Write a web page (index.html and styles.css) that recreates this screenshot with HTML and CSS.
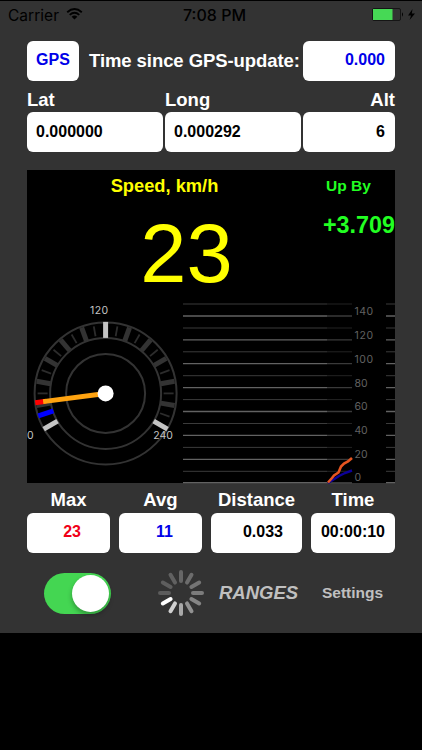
FILE: index.html
```html
<!DOCTYPE html>
<html lang="en">
<head>
	<meta charset="UTF-8">
	<title>GPS Speed</title>
	<link rel="stylesheet" href="styles.css">
</head>
<body>
	<div class="app">
		<div class="status">
			<div class="carrier">
				<svg class="carrier-name" width="54" height="22"><text x="0" y="14.5" textLength="51">Carrier</text></svg>
				<svg class="wifi" width="17" height="12" viewBox="0 0 17 12">
					<path d="M1.2 4.2Q8.5 -2 15.8 4.2M3.7 6.9Q8.5 2.8 13.3 6.9" fill="none" stroke="#000" stroke-width="1.9"/>
					<path d="M5.6 8.8Q8.5 6.4 11.4 8.8L8.5 11.6Z"/>
				</svg>
			</div>
			<svg class="clock" width="72" height="22"><text x="1" y="14.5" textLength="63">7:08 PM</text></svg>
			<svg class="battery" width="44" height="14" viewBox="0 0 44 14">
				<rect x=".5" y=".5" width="28" height="12" rx="1.5" fill="#333" stroke="#151515"/>
				<rect x="1" y="1" width="19.5" height="11" fill="#46d955"/>
				<path d="M30 4.3Q32 6.5 30 8.8Z"/>
				<path d="M40.5 1L36 7.6H39L37.6 12L43 5.6H39.8Z"/>
			</svg>
		</div>

		<div class="gps-row">
			<button class="box gps">GPS</button>
			<svg class="label since" width="214" height="24"><text x="1" y="18" textLength="211">Time since GPS-update:</text></svg>
			<div class="box update blue">0.000</div>
		</div>

		<div class="position">
			<div class="field">
				<div class="label">Lat</div>
				<div class="box left">0.000000</div>
			</div>
			<div class="field">
				<div class="label">Long</div>
				<div class="box left">0.000292</div>
			</div>
			<div class="field alt">
				<div class="label">Alt</div>
				<div class="box">6</div>
			</div>
		</div>

		<div class="display">
			<div class="readout">
				<div class="speed">
					<div class="speed-title">Speed, km/h</div>
					<div class="speed-value">23</div>
				</div>
				<div class="up">
					<div class="up-title">Up By</div>
					<div class="up-value">+3.709</div>
				</div>
			</div>
			<div class="graphs">
				<svg class="gauge" width="156" height="183" viewBox="27 300 156 183">
					<g fill="none" stroke="#333" stroke-width="2">
						<circle cx="105.6" cy="393.4" r="71"/>
						<circle cx="105.6" cy="393.4" r="55.5"/>
						<circle cx="105.6" cy="393.4" r="39.5"/>
					</g>
					<!-- ticks are drawn upwards from the centre, then turned -->
					<g transform="translate(105.6 393.4)">
						<g stroke="#333" stroke-width="5">
							<path d="M0-56V-70" transform="rotate(-100)"/>
							<path d="M0-56V-70" transform="rotate(-80)"/>
							<path d="M0-56V-70" transform="rotate(-60)"/>
							<path d="M0-56V-70" transform="rotate(-40)"/>
							<path d="M0-56V-70" transform="rotate(-20)"/>
							<path d="M0-56V-70" transform="rotate(20)"/>
							<path d="M0-56V-70" transform="rotate(40)"/>
							<path d="M0-56V-70" transform="rotate(60)"/>
							<path d="M0-56V-70" transform="rotate(80)"/>
							<path d="M0-56V-70" transform="rotate(100)"/>
						</g>
						<g stroke="#2c2c2c" stroke-width="1.8">
							<path d="M0-58V-68" transform="rotate(-90)"/>
							<path d="M0-58V-68" transform="rotate(-70)"/>
							<path d="M0-58V-68" transform="rotate(-50)"/>
							<path d="M0-58V-68" transform="rotate(-30)"/>
							<path d="M0-58V-68" transform="rotate(-10)"/>
							<path d="M0-58V-68" transform="rotate(10)"/>
							<path d="M0-58V-68" transform="rotate(30)"/>
							<path d="M0-58V-68" transform="rotate(50)"/>
							<path d="M0-58V-68" transform="rotate(70)"/>
							<path d="M0-58V-68" transform="rotate(90)"/>
							<path d="M0-58V-68" transform="rotate(110)"/>
						</g>
						<g stroke="#c4c4c4" stroke-width="5">
							<path d="M0-55.5V-71.5" transform="rotate(-120)"/>
							<path d="M0-55.5V-71.5"/>
							<path d="M0-55.5V-71.5" transform="rotate(120)"/>
						</g>
						<path d="M0-55V-71" stroke="#00f" stroke-width="5" transform="rotate(-108.5)"/>
						<path d="M0-60V-71" stroke="#f00" stroke-width="5" transform="rotate(-97.5)"/>
						<path d="M0 0V-63" stroke="#ffa310" stroke-width="5" transform="rotate(-97.5)"/>
						<circle r="8" fill="#fff"/>
					</g>
					<g class="gauge-text">
						<text x="90" y="314" textLength="18">120</text>
						<text x="27" y="439.3">0</text>
						<text x="153.3" y="439.3" textLength="19.5">240</text>
					</g>
				</svg>
				<svg class="chart" width="212" height="183" viewBox="183 300 212 183">
					<path d="M183 304H352M183 328H352M183 351.8H352M183 375.7H352M183 399.6H352M183 423.5H352M183 447.4H352M183 471.3H352M386 304H395M386 328H395M386 351.8H395M386 375.7H395M386 399.6H395M386 423.5H395M386 447.4H395M386 471.3H395" stroke="#3b3b3b"/>
					<path d="M183 316H352M183 339.8H352M183 363.7H352M183 387.6H352M183 411.5H352M183 435.4H352M183 459.3H352M183 482.6H352M386 316H395M386 339.8H395M386 363.7H395M386 387.6H395M386 411.5H395M386 435.4H395M386 459.3H395M386 482.6H395" stroke="#626262" stroke-width="1.3"/>
					<rect x="327" y="300" width="25" height="183" opacity=".4"/>
					<path d="M328 483L339 476L345 473L352 470.5" fill="none" stroke="#0c0098" stroke-width="2.4"/>
					<path d="M328 482.5L332 478L334 475.5L338.5 472.5L341 466.5L344 463.5L348 461.5L352 458" fill="none" stroke="#e65520" stroke-width="2.6"/>
					<g class="chart-text">
						<text x="354.5" y="314.8" textLength="18.5">140</text>
						<text x="354.5" y="338.7" textLength="18.5">120</text>
						<text x="354.5" y="362.5" textLength="18.5">100</text>
						<text x="354.5" y="386.5" textLength="13">80</text>
						<text x="354.5" y="410.3" textLength="13">60</text>
						<text x="354.5" y="434.3" textLength="13">40</text>
						<text x="354.5" y="458.2" textLength="13">20</text>
						<text x="354.5" y="481.4">0</text>
					</g>
				</svg>
			</div>
		</div>

		<div class="totals">
			<div class="field">
				<div class="label">Max</div>
				<div class="box red mid">23</div>
			</div>
			<div class="field">
				<div class="label">Avg</div>
				<div class="box blue mid">11</div>
			</div>
			<div class="field">
				<div class="label">Distance</div>
				<div class="box dist">0.033</div>
			</div>
			<div class="field">
				<div class="label">Time</div>
				<div class="box time">00:00:10</div>
			</div>
		</div>

		<div class="controls">
			<div class="switch"><div class="knob"></div></div>
			<svg class="spinner" width="48" height="48" viewBox="-24 -24 48 48" stroke-width="4" stroke-linecap="round">
				<path d="M0-12V-21" stroke="#666"/>
				<path d="M0-12V-21" stroke="#6c6c6c" transform="rotate(30)"/>
				<path d="M0-12V-21" stroke="#747474" transform="rotate(60)"/>
				<path d="M0-12V-21" stroke="#7c7c7c" transform="rotate(90)"/>
				<path d="M0-12V-21" stroke="#858585" transform="rotate(120)"/>
				<path d="M0-12V-21" stroke="#929292" transform="rotate(150)"/>
				<path d="M0-12V-21" stroke="#a9a9a9" transform="rotate(180)"/>
				<path d="M0-12V-21" stroke="#d0d0d0" transform="rotate(210)"/>
				<path d="M0-12V-21" stroke="#fff" transform="rotate(240)"/>
				<path d="M0-12V-21" stroke="#5c5c5c" transform="rotate(270)"/>
				<path d="M0-12V-21" stroke="#5e5e5e" transform="rotate(300)"/>
				<path d="M0-12V-21" stroke="#616161" transform="rotate(330)"/>
			</svg>
			<div class="ranges">RANGES</div>
			<div class="settings">Settings</div>
		</div>
	</div>
</body>
</html>
```

FILE: styles.css
```css
*{
	box-sizing: border-box;
}
body{
	margin: 0;
	height: 750px;
	padding-top: 1px;
	background-color: #000;
	font-family: "Liberation Sans", Arial, sans-serif;
	font-weight: bold;
	overflow: hidden;
}
svg{
	display: block;
	flex: none;
	overflow: visible;
}
.app{
	width: 422px;
	height: 632px;
	padding: 0 27px;
	background-color: #333;
}
.status{
	height: 39.5px;
	margin: 0 -27px;
	padding: 5px 6px 0 8px;
	display: flex;
	align-items: flex-start;
	font-family: Inter, sans-serif;
	font-size: 15.5px;
	font-weight: 400;
}
.carrier{
	display: flex;
	width: 174px;
}
.wifi{
	margin: 2px 0 0 4px;
}
.clock{
	font-weight: 500;
	font-size: 16px;
}
.battery{
	margin: 2px 0 0 auto;
}
.box{
	display: flex;
	align-items: center;
	justify-content: flex-end;
	height: 40px;
	padding: 0 10px 1px 9px;
	border: 0;
	border-radius: 6px;
	background-color: #fff;
	color: #000;
	font-size: 16px;
	white-space: nowrap;
}
.label{
	color: #fff;
	font-size: 18.5px;
	line-height: 24px;
	white-space: nowrap;
}
.since{
	margin-left: 7px;
	fill: #fff;
}
.blue{
	color: #0000e8;
}
.red{
	color: #f00018;
}
.gps-row{
	display: flex;
	justify-content: space-between;
	align-items: center;
}
.gps{
	width: 52px;
	padding: 0 0 1px;
	justify-content: center;
	color: #0000e8;
	font-family: inherit;
	font-weight: bold;
}
.update{
	width: 92px;
}
.position{
	display: grid;
	grid-template-columns: 136px 136px 92px;
	column-gap: 2px;
	margin-top: 6.5px;
}
.position .label{
	height: 25px;
	line-height: 26px;
}
.left{
	justify-content: flex-start;
}
.alt{
	text-align: right;
}
.display{
	width: 368px;
	height: 313px;
	margin-top: 18px;
	background-color: #000;
}
.readout{
	display: flex;
	justify-content: flex-end;
	height: 130px;
}
.speed{
	width: 170px;
	margin-right: 53px;
	text-align: center;
	color: #ff0;
}
.speed-title{
	margin-left: -39px;
	padding-top: 5px;
	font-size: 18.3px;
	line-height: 22px;
}
.speed-value{
	margin: 9px 0 0 5px;
	font-size: 83px;
	line-height: 96px;
	font-weight: 400;
}
.up{
	width: 73px;
	color: #2f2;
}
.up-title{
	padding: 5px 0 0 4px;
	font-size: 15.5px;
	line-height: 22px;
}
.up-value{
	margin: 14px 0 0 1px;
	font-size: 23.3px;
	line-height: 28px;
	white-space: nowrap;
}
.graphs{
	display: flex;
}
.gauge-text{
	fill: #c4c4c4;
	font: 400 10.5px Inter, sans-serif;
}
.chart-text{
	fill: #626262;
	font: 400 10.5px Inter, sans-serif;
}
.totals{
	display: grid;
	grid-template-columns: 83px 83px 91px 84px;
	justify-content: space-between;
	margin-top: 4px;
	text-align: center;
}
.totals .label{
	height: 25.5px;
	line-height: 25px;
}
.mid{
	padding-right: 29px;
}
.dist{
	padding-right: 19px;
}
.controls{
	display: flex;
	align-items: center;
	height: 48px;
	margin-top: 16.5px;
	padding-left: 17px;
	color: #c0c0c0;
}
.switch{
	display: flex;
	justify-content: flex-end;
	flex: none;
	width: 67px;
	height: 41px;
	padding: 2px;
	border-radius: 21px;
	background-color: #44d652;
}
.knob{
	width: 37px;
	height: 37px;
	border-radius: 50%;
	background-color: #fff;
	box-shadow: 0 3px 5px rgba(0,0,0,.3);
}
.spinner{
	margin-left: 46px;
}
.ranges{
	width: 80px;
	margin-left: 14px;
	font-size: 18.5px;
	font-style: italic;
}
.settings{
	margin-left: 23px;
	font-size: 15.5px;
}
```
